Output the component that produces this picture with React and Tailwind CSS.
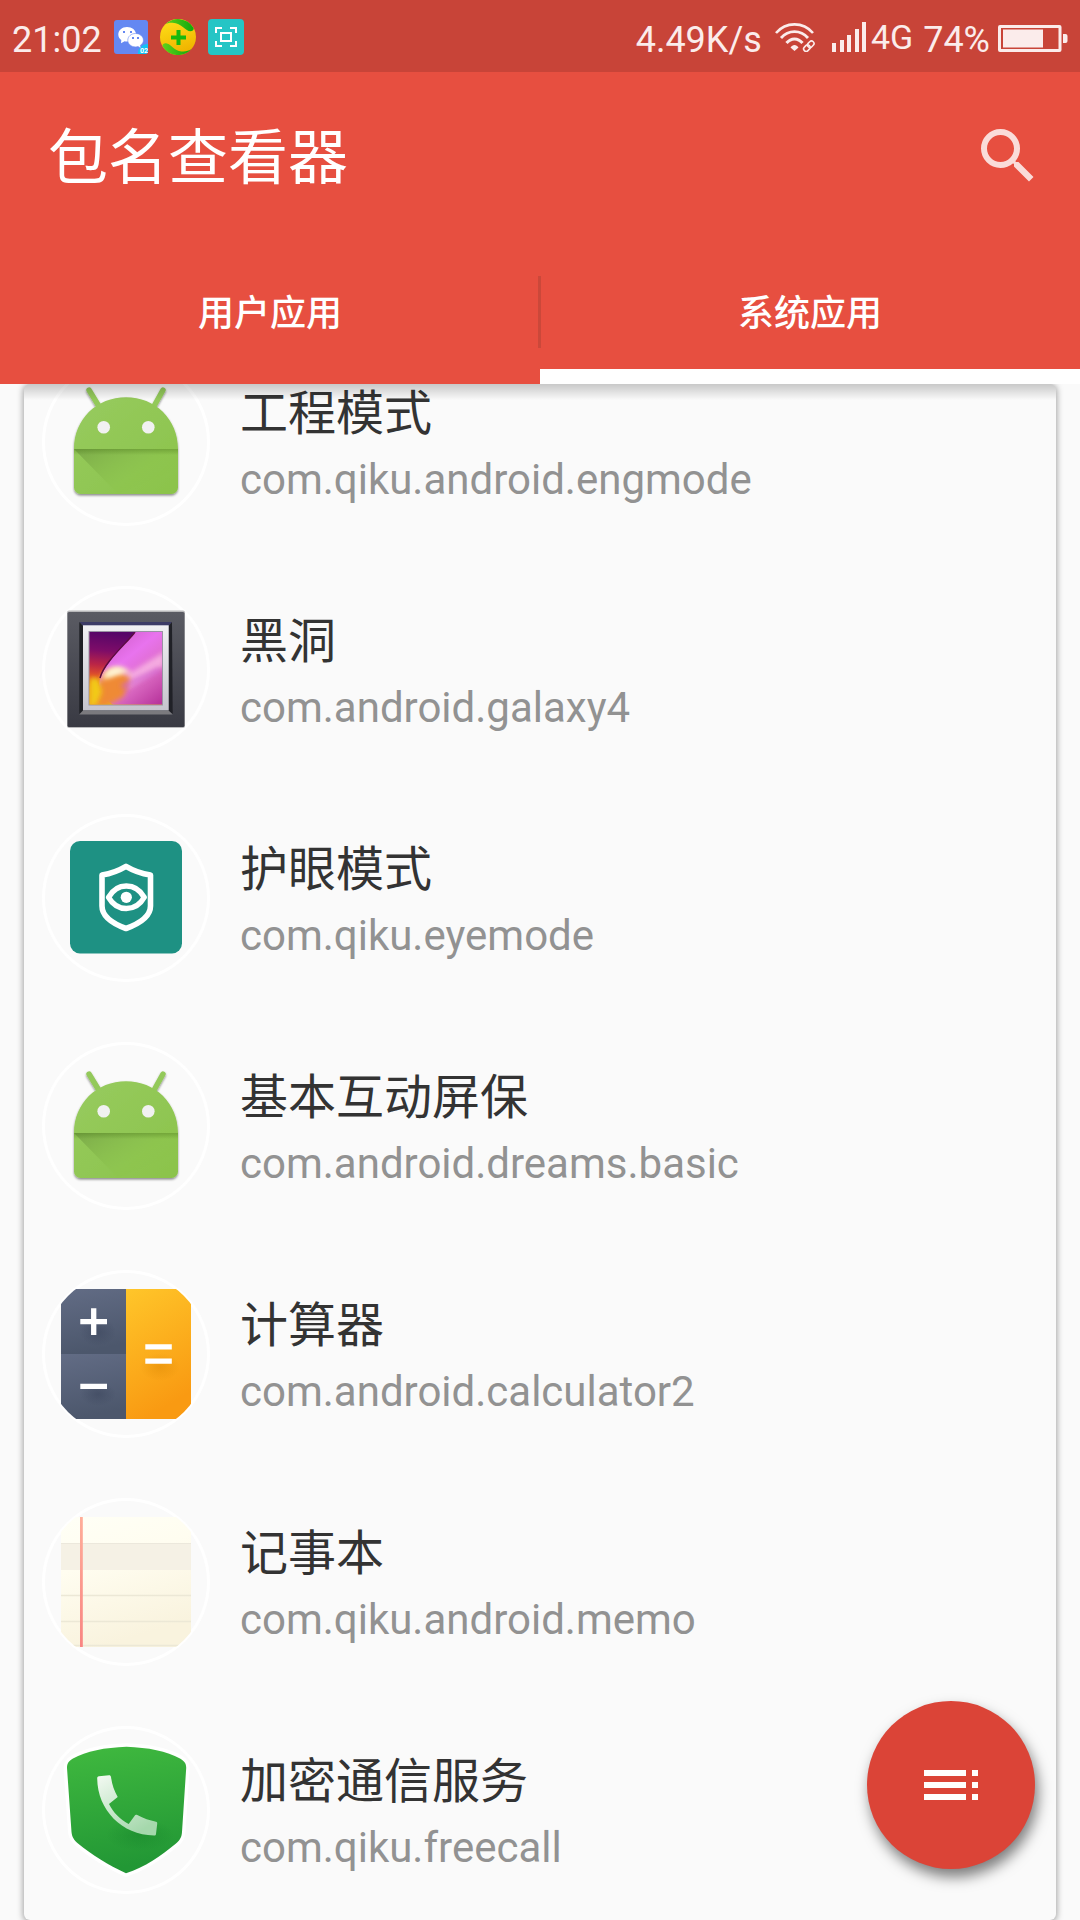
import React from "react";

function AndroidIcon({ id }) {
  return (
    <svg viewBox="0 0 168 168" className="size-full" aria-hidden="true">
      <defs>
        <linearGradient id={`${id}-body`} x1="0" y1="0" x2="1" y2="1">
          <stop offset="0" stopColor="#97cb5f" />
          <stop offset="1" stopColor="#8bc34a" />
        </linearGradient>
        <linearGradient id={`${id}-fold`} x1="0" y1="0" x2="1" y2="0.7">
          <stop offset="0" stopColor="#78a648" stopOpacity="0.95" />
          <stop offset="0.65" stopColor="#8bc34a" stopOpacity="0.3" />
          <stop offset="1" stopColor="#8bc34a" stopOpacity="0" />
        </linearGradient>
        <linearGradient id={`${id}-seam`} x1="0" y1="0" x2="0" y2="1">
          <stop offset="0" stopColor="#4d7a1c" stopOpacity="0.4" />
          <stop offset="1" stopColor="#4d7a1c" stopOpacity="0" />
        </linearGradient>
        <filter id={`${id}-drop`} x="-10%" y="-10%" width="120%" height="125%">
          <feDropShadow dx="0" dy="1.5" stdDeviation="1.2" floodColor="#000" floodOpacity="0.45" />
        </filter>
      </defs>
      <g filter={`url(#${id}-drop)`}>
        <path d="M47 32 58 50M121 32l-10 18" stroke="#93c95a" strokeWidth="5.4" strokeLinecap="round" />
        <path
          d="M32 91C32 61 55 39.300 84 39.300S136 61 136 91V129.500a6.500 6.500 0 0 1-6.500 6.500H38.500a6.500 6.500 0 0 1-6.500-6.500Z"
          fill={`url(#${id}-body)`}
        />
      </g>
      <path d="M32 91h104v20L76 136Z" fill={`url(#${id}-fold)`} />
      <rect x="32" y="91" width="104" height="6" fill={`url(#${id}-seam)`} />
      <circle cx="61.700" cy="69.300" r="6.300" fill="#f1f1f1" />
      <circle cx="106.300" cy="69.300" r="6.300" fill="#f1f1f1" />
    </svg>
  );
}

function GalaxyIcon() {
  return (
    <svg viewBox="0 0 168 168" className="size-full" aria-hidden="true">
      <defs>
        <linearGradient id="gx-frame" x1="0" y1="0" x2="0" y2="1">
          <stop offset="0" stopColor="#5a5b63" />
          <stop offset="1" stopColor="#393a43" />
        </linearGradient>
        <linearGradient id="gx-mat" x1="0" y1="0" x2="0" y2="1">
          <stop offset="0" stopColor="#f0f0f3" />
          <stop offset="1" stopColor="#c6c5cd" />
        </linearGradient>
        <linearGradient id="gx-dark" x1="0.2" y1="0" x2="0.1" y2="1">
          <stop offset="0" stopColor="#560668" />
          <stop offset="0.25" stopColor="#7d0c68" />
          <stop offset="0.45" stopColor="#bb2546" />
          <stop offset="0.6" stopColor="#e0502a" />
          <stop offset="0.78" stopColor="#f2a316" />
          <stop offset="1" stopColor="#f0c010" />
        </linearGradient>
        <linearGradient id="gx-pink" x1="0.2" y1="0" x2="0.9" y2="1">
          <stop offset="0" stopColor="#cf5cc8" />
          <stop offset="0.35" stopColor="#e873ee" />
          <stop offset="0.65" stopColor="#dc6cc4" />
          <stop offset="1" stopColor="#b8359c" />
        </linearGradient>
        <filter id="gx-blur" x="-50%" y="-50%" width="200%" height="200%">
          <feGaussianBlur stdDeviation="2.4" />
        </filter>
        <clipPath id="gx-clip">
          <rect x="47.500" y="46" width="72.500" height="72.500" />
        </clipPath>
      </defs>
      <rect x="25" y="24.500" width="118" height="117.500" rx="2" fill="#8c8c90" opacity="0.6" />
      <rect x="25.500" y="26" width="117" height="115" rx="1.500" fill="url(#gx-frame)" />
      <path d="M37.300 36 130 36 126.500 40H41Z" fill="#3c3b66" />
      <path d="M37.300 36 41 40V124.500L37.300 128Z" fill="#1f2025" />
      <path d="M130 36 126.500 40V124.500L130.700 128Z" fill="#202127" />
      <path d="M37.300 128.500 41 124.500H126.500L130.700 128.500Z" fill="#7b7a7e" />
      <rect x="41" y="39.300" width="85.700" height="85" fill="url(#gx-mat)" />
      <rect x="46.500" y="45" width="74.500" height="74.500" fill="#9a93a4" />
      <g clipPath="url(#gx-clip)">
        <rect x="47" y="46" width="74" height="73" fill="url(#gx-dark)" />
        <path d="M93 46C86 56 60 78 57 98c2 10 12 22 18 22h46V46Z" fill="url(#gx-pink)" />
        <path d="M122 66 80 92l6 10 36-22Z" fill="#ffc6ea" opacity="0.7" filter="url(#gx-blur)" />
        <path d="M57 100C60 84 66 82 77 84l12 9-8 18-18 10H48V98Z" fill="#ef8a35" filter="url(#gx-blur)" />
        <path d="M48 92h8l4 14-6 14h-6Z" fill="#f2ca12" filter="url(#gx-blur)" />
        <path d="M60 93C64 79 80 76 90 88c-12-3-20 5-30 5Z" fill="#fff0c8" filter="url(#gx-blur)" />
        <path d="M64 90C68 83 78 81 81 86c-8 0-12 4-17 4Z" fill="#fff8dc" filter="url(#gx-blur)" />
        <path d="M80 101l38-18" stroke="#cf5fd0" strokeWidth="5" opacity="0.7" filter="url(#gx-blur)" />
        <path d="M93 46C86 56 62 76 58 92" fill="none" stroke="#5a0c40" strokeWidth="1.400" />
      </g>
    </svg>
  );
}

function EyeIcon() {
  return (
    <svg viewBox="0 0 168 168" className="size-full" aria-hidden="true" fill="none">
      <rect x="28" y="27" width="112" height="112.500" rx="10" fill="#1e9183" />
      <path
        d="M84 52.300C77 56.500 69 59.500 60 61V92c0 9 9 17 24 22.500C99 109 108.500 101 108.500 92V61C99 59.500 91 56.500 84 52.300Z"
        stroke="#fff"
        strokeWidth="5.600"
        strokeLinejoin="round"
      />
      <path
        d="M66.500 83.300C71 75.500 77 72 84.300 72s13.500 3.500 18 11.300C98 91 92 94.500 84.300 94.500S71 91 66.500 83.300Z"
        stroke="#fff"
        strokeWidth="5.400"
        strokeLinejoin="round"
      />
      <circle cx="84.300" cy="83.300" r="5.600" fill="#fff" />
    </svg>
  );
}

function CalculatorIcon() {
  return (
    <svg viewBox="0 0 168 168" className="size-full" aria-hidden="true">
      <defs>
        <linearGradient id="calc-a" x1="0" y1="0" x2="0.2" y2="1">
          <stop offset="0" stopColor="#626c85" />
          <stop offset="1" stopColor="#4c576c" />
        </linearGradient>
        <linearGradient id="calc-b" x1="0" y1="0" x2="0.3" y2="1">
          <stop offset="0" stopColor="#ffc62a" />
          <stop offset="1" stopColor="#f99a12" />
        </linearGradient>
        <radialGradient id="calc-s">
          <stop offset="0" stopColor="#39435a" stopOpacity="0.5" />
          <stop offset="1" stopColor="#39435a" stopOpacity="0" />
        </radialGradient>
        <radialGradient id="calc-t">
          <stop offset="0" stopColor="#d98300" stopOpacity="0.4" />
          <stop offset="1" stopColor="#d98300" stopOpacity="0" />
        </radialGradient>
        <clipPath id="calc-clip">
          <circle cx="84" cy="84" r="82" />
        </clipPath>
      </defs>
      <g clipPath="url(#calc-clip)">
        <rect x="19" y="19" width="65" height="65" fill="url(#calc-a)" />
        <rect x="19" y="84" width="65" height="65" fill="url(#calc-a)" />
        <rect x="84" y="19" width="65" height="130" fill="url(#calc-b)" />
      </g>
      <ellipse cx="56" cy="62" rx="18" ry="14" fill="url(#calc-s)" />
      <ellipse cx="56" cy="124" rx="18" ry="12" fill="url(#calc-s)" />
      <ellipse cx="118" cy="97" rx="20" ry="14" fill="url(#calc-t)" />
      <path
        d="M38.300 51.700h26.700M51.700 38.300v26.700M38.300 116.300h26.700M103.300 76.800h26.500M103.300 91.200h26.500"
        stroke="#fff"
        strokeWidth="5.300"
      />
    </svg>
  );
}

function MemoIcon() {
  return (
    <svg viewBox="0 0 168 168" className="size-full" aria-hidden="true">
      <defs>
        <linearGradient id="memo-p" x1="0" y1="0" x2="0.3" y2="1">
          <stop offset="0" stopColor="#fffff6" />
          <stop offset="0.4" stopColor="#fffdf0" />
          <stop offset="1" stopColor="#f9f3de" />
        </linearGradient>
        <linearGradient id="memo-r" x1="0" y1="0" x2="0" y2="1">
          <stop offset="0" stopColor="#ffae9a" />
          <stop offset="1" stopColor="#f98582" />
        </linearGradient>
        <clipPath id="memo-clip">
          <circle cx="84" cy="84" r="82" />
        </clipPath>
      </defs>
      <g clipPath="url(#memo-clip)">
        <rect x="19" y="19" width="130" height="130" fill="url(#memo-p)" />
        <rect x="19" y="45" width="130" height="27" fill="#f5f1e5" />
        <path d="M19 97.500h130M19 123.500h130M19 147.500h130" stroke="#ece8d6" strokeWidth="1.300" />
        <path d="M19 45.500h130" stroke="#ece8dc" strokeWidth="1" />
      </g>
      <rect x="38" y="19" width="2.800" height="130" fill="url(#memo-r)" />
    </svg>
  );
}

function CallIcon() {
  return (
    <svg viewBox="0 0 168 168" className="size-full" aria-hidden="true">
      <defs>
        <linearGradient id="call-g" x1="0" y1="0" x2="0.15" y2="1">
          <stop offset="0" stopColor="#40b93f" />
          <stop offset="1" stopColor="#229735" />
        </linearGradient>
        <linearGradient id="call-p" x1="0" y1="0" x2="0.6" y2="1">
          <stop offset="0" stopColor="#f4faf3" />
          <stop offset="1" stopColor="#a5d8ac" />
        </linearGradient>
        <radialGradient id="call-s">
          <stop offset="0" stopColor="#0f7a26" stopOpacity="0.35" />
          <stop offset="1" stopColor="#0f7a26" stopOpacity="0" />
        </radialGradient>
      </defs>
      <path
        d="M84.500 20.700C106 21.500 125 25 138 32.500c4.500 2.800 6.300 5 6.200 9.500L140 106c-.3 5-2 8-6 11.500C119 130 103 141 84 147.300 66 139 50 129 36 117.500c-4-3.500-6-6.500-6.500-11.500L25 42c0-4.500 1.500-6.700 6-9.500C44 25 63 21.500 84.500 20.700Z"
        fill="url(#call-g)"
        stroke="#fff"
        strokeWidth="7"
        strokeLinejoin="round"
        paintOrder="stroke"
      />
      <ellipse cx="98" cy="109" rx="34" ry="16" fill="url(#call-s)" />
      <path
        d="M57 50.300 67 49.300c1.300 0 1.700.5 2 1.700 1 7 3 13.500 6.700 20L67 78c4 8.500 11.500 15.500 19.700 20L92.500 90c.8-1.300 1.500-1.600 2.800-1 6.200 3.300 12.500 5.500 18.700 6.700 1 .3 1.300.8 1.200 2L114 108c-.2 1.200-.8 1.600-2 1.500C80 109 55.500 84 55.200 52.500c0-1.300.4-2 1.800-2.200Z"
        fill="url(#call-p)"
      />
    </svg>
  );
}

const apps = [
  { name: "工程模式", pkg: "com.qiku.android.engmode", icon: <AndroidIcon id="eng" /> },
  { name: "黑洞", pkg: "com.android.galaxy4", icon: <GalaxyIcon /> },
  { name: "护眼模式", pkg: "com.qiku.eyemode", icon: <EyeIcon /> },
  { name: "基本互动屏保", pkg: "com.android.dreams.basic", icon: <AndroidIcon id="dream" /> },
  { name: "计算器", pkg: "com.android.calculator2", icon: <CalculatorIcon /> },
  { name: "记事本", pkg: "com.qiku.android.memo", icon: <MemoIcon /> },
  { name: "加密通信服务", pkg: "com.qiku.freecall", icon: <CallIcon /> },
];

function ChatBadge() {
  return (
    <svg viewBox="0 0 34 34" className="size-[34px]" aria-hidden="true">
      <defs>
        <clipPath id="chat-clip">
          <rect width="34" height="34" rx="3" />
        </clipPath>
      </defs>
      <g clipPath="url(#chat-clip)">
        <rect width="34" height="34" fill="#6488f2" />
        <circle cx="33" cy="33" r="9" fill="#12c3f4" />
      </g>
      <path d="M13 7C8 7 4.300 10.300 4.300 14.500c0 2.300 1.200 4.300 3 5.600L7 23.200l3.600-2c.8.200 1.600.3 2.400.3 5 0 9-3 9-7.200S18 7 13 7Z" fill="#fff" />
      <path d="M21.500 13.500c-4.300 0-7.700 2.900-7.700 6.700s3.400 6.700 7.700 6.700c.9 0 1.700-.1 2.500-.4l3 1.700-.6-2.900c1.900-1.200 3-3 3-5.100 0-3.800-3.600-6.700-7.900-6.700Z" fill="#fff" stroke="#6488f2" strokeWidth="0.600" />
      <path d="M9 11h2v2H9zM16 11h2v2h-2zM18 17h2v2h-2zM23 17h2v2h-2z" fill="#6488f2" />
      <text x="26" y="33" fontSize="7" fontWeight="700" fontFamily="Roboto, sans-serif" fill="#fff">02</text>
    </svg>
  );
}

function GuardBadge() {
  return (
    <svg viewBox="0 0 36 36" className="size-9" aria-hidden="true">
      <defs>
        <linearGradient id="guard-y" x1="0" y1="0" x2="0.300" y2="1">
          <stop offset="0" stopColor="#ffe21a" />
          <stop offset="1" stopColor="#f0b400" />
        </linearGradient>
        <linearGradient id="guard-g" x1="0" y1="0" x2="1" y2="0">
          <stop offset="0" stopColor="#5fd01c" />
          <stop offset="1" stopColor="#0fa80c" />
        </linearGradient>
      </defs>
      <circle cx="18" cy="18" r="18" fill="url(#guard-y)" />
      <path d="M5 5.600A18 18 0 0 1 33.400 8.700c.8 1.800-.4 3.600-3 3.600C25.500 12.300 22 4.500 12.500 3.800 9.500 3.600 7 4.300 5 5.600Z" fill="url(#guard-g)" />
      <path d="M31.500 30A18 18 0 0 1 2.700 27.500C2 25.500 3.500 24 6 24.200c4.500.4 8 7.500 15.500 8.200 4 .4 7.500-.6 10-2.400Z" fill="url(#guard-g)" />
      <path d="M18.500 11v15M11 18.500h15" stroke="#17b80e" strokeWidth="4" />
    </svg>
  );
}

function CaptureBadge() {
  return (
    <svg viewBox="0 0 36 36" className="size-9" aria-hidden="true" fill="none" stroke="#fff" strokeWidth="2">
      <rect width="36" height="36" rx="4" fill="#25c5c5" stroke="none" />
      <path d="M8 14V9h6M22 9h6v5M28 22v5h-6M14 27H8v-5" />
      <rect x="13" y="14" width="10" height="8" />
    </svg>
  );
}

function WifiIcon() {
  return (
    <svg viewBox="0 0 40 30" className="ml-[13px] h-[30px] w-10" aria-hidden="true" fill="none" stroke="currentColor">
      <path d="M1 11C11-.5 28-.5 38 11" strokeWidth="2.600" />
      <path d="M6 16C13.500 7.500 25.500 7.500 33 16" strokeWidth="2.800" />
      <path d="M11.500 21C16 15.500 23 15.500 27.500 21" strokeWidth="3" />
      <path d="M15.500 25.500c2-3.500 6-3.500 8 0L19.500 29Z" fill="currentColor" stroke="none" />
      <g strokeWidth="1.600" transform="rotate(-45 34 24)">
        <rect x="27.500" y="21.500" width="7" height="5" rx="2.500" />
        <rect x="33" y="21.500" width="7" height="5" rx="2.500" />
      </g>
    </svg>
  );
}

function SignalIcon() {
  return (
    <svg viewBox="0 0 34 30" className="ml-[17px] h-[30px] w-[34px]" aria-hidden="true" fill="currentColor">
      <path d="M0 21h4v9H0zM8 18h4v12H8zM15 13h4v17h-4zM23 7h4v23h-4zM30 0h4v30h-4z" />
    </svg>
  );
}

function BatteryIcon() {
  return (
    <svg viewBox="0 0 70 27" className="ml-2 h-[27px] w-[70px]" aria-hidden="true">
      <rect x="1.500" y="1.500" width="60.500" height="24" rx="0.500" fill="none" stroke="currentColor" strokeWidth="3" />
      <rect x="5" y="4.500" width="40" height="18" fill="currentColor" />
      <path d="M65 9h2.500a2 2 0 0 1 2 2v5a2 2 0 0 1-2 2H65Z" fill="currentColor" />
    </svg>
  );
}

function StatusBar() {
  return (
    <div className="flex h-[72px] shrink-0 items-center justify-between bg-[#c84438] pr-3 pl-3 text-4xl leading-10 text-[#fbeceb]">
      <div className="flex items-center pt-2">
        <span className="pr-3">21:02</span>
        <div className="flex items-center gap-3 pb-1.5">
          <ChatBadge />
          <GuardBadge />
          <CaptureBadge />
        </div>
      </div>
      <div className="flex items-center pt-2">
        <span>4.49K/s</span>
        <div className="flex items-center pb-1.5">
          <WifiIcon />
          <SignalIcon />
          <span className="pl-[5px] text-[34px]">4G</span>
        </div>
        <span className="pl-[10px]">74%</span>
        <div className="pb-1">
          <BatteryIcon />
        </div>
      </div>
    </div>
  );
}

export default function App() {
  const [tab, setTab] = React.useState("system");
  const tabs = [
    { id: "user", label: "用户应用" },
    { id: "system", label: "系统应用" },
  ];

  return (
    <div className="relative flex h-screen flex-col overflow-hidden bg-[#fafafa] font-[Roboto,'Noto_Sans_CJK_SC',sans-serif]">
      <StatusBar />
      <header className="relative z-10 shrink-0 bg-[#e74f40] text-white">
        <div className="flex h-[168px] items-center justify-between pr-9 pl-12">
          <h1 className="pt-1.5 text-[60px] leading-[72px] font-normal">包名查看器</h1>
          <button type="button" aria-label="搜索" className="size-[72px] text-white/80">
            <svg viewBox="0 0 24 24" className="size-full" fill="currentColor" aria-hidden="true">
              <path d="M15.500 14h-.79l-.28-.27A6.471 6.471 0 0 0 16 9.500 6.500 6.500 0 1 0 9.500 16c1.610 0 3.090-.59 4.230-1.570l.27.28v.79l5 4.990L20.490 19l-4.990-5zm-6 0C7.010 14 5 11.990 5 9.500S7.010 5 9.500 5 14 7.010 14 9.500 11.990 14 9.500 14z" />
            </svg>
          </button>
        </div>
        <div role="tablist" className="flex h-36 items-center">
          {tabs.map((t, i) => (
            <React.Fragment key={t.id}>
              {i > 0 && <div className="relative -mr-px -ml-0.5 h-[72px] w-[3px] bg-[#cb483a]" />}
              <button
                type="button"
                role="tab"
                aria-selected={tab === t.id}
                onClick={() => setTab(t.id)}
                className={
                  tab === t.id
                    ? "h-full flex-1 border-y-[15px] border-t-transparent border-b-white pt-1 text-4xl font-medium"
                    : "h-full flex-1 border-y-[15px] border-transparent pt-1 text-4xl font-medium"
                }
              >
                {t.label}
              </button>
            </React.Fragment>
          ))}
        </div>
      </header>

      <main className="relative mx-6 min-h-0 flex-1 overflow-hidden rounded-md bg-[#fafafa] shadow-[0_1px_6px_1px_rgba(0,0,0,0.35)]">
        <ul className="-mt-14">
          {apps.map((app) => (
            <li key={app.pkg} className="flex h-[228px] items-center gap-[30px] pl-[18px]">
              <div className="relative size-[168px] shrink-0">
                <div className="absolute inset-0 rounded-full border-[3px] border-white" />
                <div className="relative size-full">{app.icon}</div>
              </div>
              <div className="min-w-0 pt-1">
                <h2 className="text-5xl leading-[72px] font-normal text-[#333333]">{app.name}</h2>
                <p className="text-[42px] leading-[60px] text-[#929292]">{app.pkg}</p>
              </div>
            </li>
          ))}
        </ul>
        <div className="pointer-events-none absolute inset-x-0 top-0 h-4 bg-linear-to-b from-black/20 to-transparent" />
      </main>

      <button
        type="button"
        aria-label="菜单"
        className="absolute right-[45px] bottom-[51px] flex size-[168px] items-center justify-center rounded-full bg-[#db4437] shadow-[3px_8px_14px_0_rgba(0,0,0,0.5)]"
      >
        <svg viewBox="0 0 54 30" className="h-[30px] w-[54px]" fill="#fff" aria-hidden="true">
          <path d="M0 0h42v6H0zM48 0h6v6h-6zM0 12h42v6H0zM48 12h6v6h-6zM0 24h42v6H0zM48 24h6v6h-6z" />
        </svg>
      </button>
    </div>
  );
}
